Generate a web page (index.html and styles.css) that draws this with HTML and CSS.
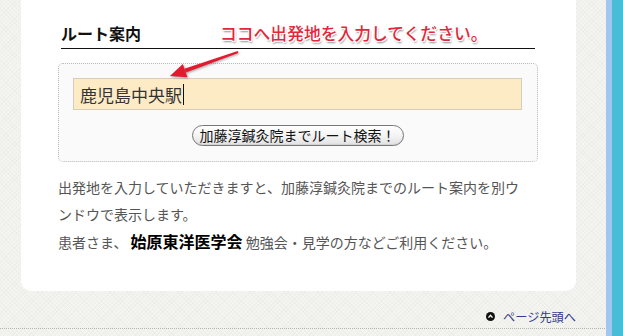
FILE: index.html
```html
<!DOCTYPE html>
<html lang="ja">
<head>
<meta charset="utf-8">
<title>ルート案内</title>
<link rel="stylesheet" href="styles.css">
</head>
<body>
<div class="layout">
  <div class="main">
    <section class="card">
      <h2 class="heading">ルート案内</h2>
      <div class="note">ココへ出発地を入力してください。</div>
      <svg class="arrow" width="90" height="40" viewBox="0 0 90 40" aria-hidden="true">
        <polygon points="78.3,7.9 77.7,6.1 24.4,23.8 25.8,27.6" fill="#e2192f"/>
        <polygon points="10,31 22.8,19.1 27.4,32.3" fill="#e2192f"/>
      </svg>
      <div class="route-box">
        <div class="field"><span class="value">鹿児島中央駅</span><span class="caret"></span></div>
        <div class="actions"><button class="search-btn" type="button">加藤淳鍼灸院までルート検索！</button></div>
      </div>
      <p class="desc">出発地を入力していただきますと、加藤淳鍼灸院までのルート案内を別ウンドウで表示します。</p>
      <p class="desc">患者さま、 <strong class="society">始原東洋医学会</strong> 勉強会・見学の方などご利用ください。</p>
    </section>
    <div class="pagetop-row">
      <a class="pagetop" href="#"><span class="pagetop-icon"><svg width="9" height="9" viewBox="0 0 9 9"><circle cx="4.5" cy="4.5" r="4.5" fill="#111"/><polyline points="2.5,5.6 4.5,3.4 6.5,5.6" fill="none" stroke="#fff" stroke-width="1.4"/></svg></span>ページ先頭へ</a>
    </div>
    <div class="rule"></div>
  </div>
  <div class="side">
    <div class="side-light"></div>
    <div class="side-teal"></div>
  </div>
</div>
</body>
</html>
```

FILE: styles.css
```css
html, body {
  margin: 0;
  padding: 0;
}
body {
  font-family: "Noto Sans CJK JP", "Noto Sans", sans-serif;
  color: #555;
  overflow: hidden;
}
.layout {
  display: flex;
  height: 336px;
}
.main {
  width: 606px;
  flex: none;
  background-color: #f4f4f0;
  background-image:
    repeating-linear-gradient(45deg, rgba(0,0,0,0.018) 0 1px, transparent 1px 3px),
    repeating-linear-gradient(-45deg, rgba(0,0,0,0.018) 0 1px, transparent 1px 3px);
}
.card {
  position: relative;
  margin-left: 21px;
  width: 555px;
  box-sizing: border-box;
  padding: 23px 0 35px 37px;
  background: #fff;
  border-radius: 0 0 10px 10px;
}
.heading {
  margin: 0 3px;
  width: 474px;
  font-size: 16px;
  line-height: 20px;
  font-weight: bold;
  color: #111;
  padding-bottom: 5px;
  border-bottom: 1px solid #111;
}
.note {
  position: absolute;
  left: 199px;
  top: 23px;
  font-size: 16.8px;
  line-height: 20px;
  font-weight: 500;
  color: #e3283c;
  white-space: nowrap;
  text-shadow:
    1px 0 0 #fff, -1px 0 0 #fff, 0 1px 0 #fff, 0 -1px 0 #fff,
    1px 1px 0 #fff, -1px -1px 0 #fff, 1px -1px 0 #fff, -1px 1px 0 #fff,
    1px 2px 2px rgba(0,0,0,0.5);
}
.arrow {
  position: absolute;
  left: 139px;
  top: 45px;
  filter: drop-shadow(1px 1px 1px rgba(0,0,0,0.35));
}
.route-box {
  margin-top: 14px;
  width: 480px;
  box-sizing: border-box;
  padding: 14px 15px 15px 14px;
  border: 1px dotted #b8b8b8;
  border-radius: 5px;
  background: #fafafa;
}
.field {
  display: flex;
  align-items: center;
  height: 32px;
  box-sizing: border-box;
  padding-left: 6px;
  background: #fdebc6;
  border: 1px solid #d6cdbb;
  font-size: 17px;
  color: #333;
}
.caret {
  display: inline-block;
  width: 1px;
  height: 21px;
  margin-left: 1px;
  background: #111;
}
.actions {
  display: flex;
  justify-content: center;
  margin-top: 15px;
}
.search-btn {
  width: 212px;
  height: 21px;
  padding: 0;
  font-family: "Noto Sans CJK JP", sans-serif;
  font-size: 14px;
  line-height: 19px;
  color: #111;
  border: 1px solid #777;
  border-radius: 11px;
  background: linear-gradient(#ffffff, #f4f4f4 50%, #e2e2e2);
  box-shadow: inset 0 -1px 1px rgba(0,0,0,0.08);
}
.desc {
  margin: 0;
  width: 470px;
  font-size: 14px;
  line-height: 27px;
  color: #555;
}
.route-box + .desc {
  margin-top: 12px;
}
.society {
  font-size: 16px;
  font-weight: bold;
  color: #000;
}
.pagetop-row {
  display: flex;
  justify-content: flex-end;
  width: 576px;
  padding-top: 14px;
  height: 23px;
}
.pagetop {
  display: flex;
  align-items: center;
  font-size: 12.2px;
  line-height: 18px;
  color: #333a88;
  text-decoration: none;
}
.pagetop-icon {
  display: flex;
  margin-right: 8px;
}
.rule {
  width: 605px;
  border-top: 1px dotted #b5b5b0;
}
.side {
  flex: 1;
  display: flex;
}
.side-light {
  width: 6px;
  background: #a2c6ef;
}
.side-teal {
  flex: 1;
  background: #47bdd7;
}
```
